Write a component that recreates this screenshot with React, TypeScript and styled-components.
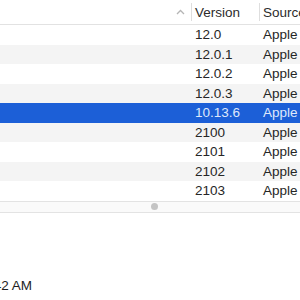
import React from "react";
import styled, { createGlobalStyle } from "styled-components";

const Global = createGlobalStyle`
  html, body { margin: 0; padding: 0; background: #ffffff; }
  body { font-family: "Liberation Sans", Arial, sans-serif; font-size: 13.5px; color: #262626; overflow: hidden; }
`;

const Page = styled.div`
  width: 300px;
  height: 300px;
  display: flex;
  flex-direction: column;
  overflow: hidden;
`;

const Table = styled.div`
  display: flex;
  flex-direction: column;
`;

const Header = styled.div`
  display: grid;
  grid-template-columns: 191px 68px 80px;
  height: 25px;
  border-bottom: 1px solid #e2e2e2;
  box-sizing: border-box;
  background: #ffffff;
`;

const HeadCell = styled.div<{ $sep?: boolean }>`
  display: flex;
  align-items: center;
  justify-content: ${(p) => (p.$sep ? "flex-start" : "flex-end")};
  padding: ${(p) => (p.$sep ? "0 0 0 3px" : "0 6px 0 0")};
  border-left: ${(p) => (p.$sep ? "1px solid #dedede" : "none")};
  margin: 3px 0;
  color: #2b2b2b;
  white-space: nowrap;
  overflow: hidden;
`;

const Row = styled.div<{ $striped: boolean; $selected: boolean }>`
  display: grid;
  grid-template-columns: 191px 68px 80px;
  height: 19.5px;
  align-items: center;
  background: ${(p) => (p.$selected ? "#1c5fd7" : p.$striped ? "#f4f4f4" : "#ffffff")};
  color: ${(p) => (p.$selected ? "#dfe8fb" : "#262626")};
`;

const Cell = styled.div`
  padding-left: 4px;
  white-space: nowrap;
  overflow: hidden;
`;

const ScrollBar = styled.div`
  height: 12px;
  border-top: 1px solid #e3e3e3;
  border-bottom: 1px solid #e3e3e3;
  background: #fafafa;
  box-sizing: border-box;
  display: flex;
  align-items: center;
  padding-left: 151px;
`;

const Knob = styled.div`
  width: 7px;
  height: 7px;
  border-radius: 50%;
  background: #c4c4c4;
`;

const Footer = styled.div`
  flex: 1;
  display: flex;
  align-items: flex-end;
  padding-bottom: 7px;
`;

const Time = styled.div`
  margin-left: -25px;
  white-space: nowrap;
  color: #1e1e1e;
`;

const Caret = () => (
  <svg width="9" height="6" viewBox="0 0 9 6">
    <path d="M1 5 L4.5 1.5 L8 5" fill="none" stroke="#b5b5b5" strokeWidth="1.3" />
  </svg>
);

const versions = ["12.0", "12.0.1", "12.0.2", "12.0.3", "10.13.6", "2100", "2101", "2102", "2103"];

export default function App() {
  return (
    <Page>
      <Global />
      <Table>
        <Header>
          <HeadCell>
            <Caret />
          </HeadCell>
          <HeadCell $sep>Version</HeadCell>
          <HeadCell $sep>Source</HeadCell>
        </Header>
        {versions.map((v, i) => (
          <Row key={v} $striped={i % 2 === 1} $selected={v === "10.13.6"}>
            <Cell />
            <Cell>{v}</Cell>
            <Cell>Apple</Cell>
          </Row>
        ))}
      </Table>
      <ScrollBar>
        <Knob />
      </ScrollBar>
      <Footer>
        <Time>10:42 AM</Time>
      </Footer>
    </Page>
  );
}
